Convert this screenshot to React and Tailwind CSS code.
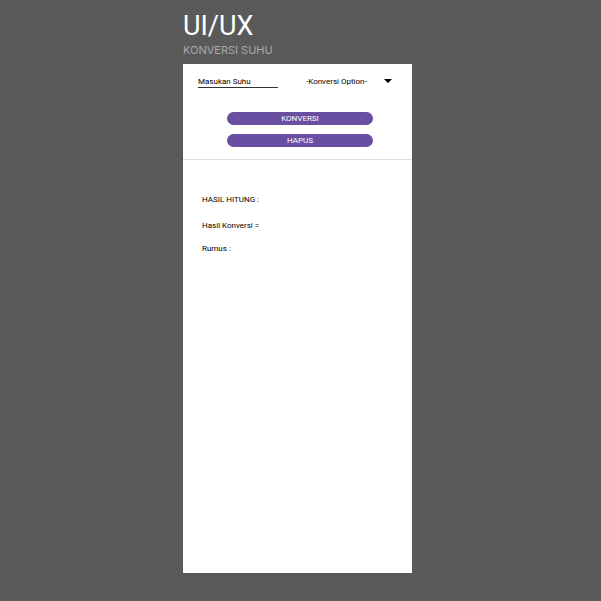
const pill =
  "block h-[13px] w-full rounded-full bg-[#684fa1] text-center text-[8px] leading-[13px] text-white";

export default function App() {
  return (
    <div className="min-h-screen bg-[#5a5a5a] pr-1.5 pb-7 font-['Roboto','Inter',sans-serif]">
      <div className="mx-auto w-full max-w-[229px]">
        <header className="pt-2.5 pb-1.5">
          <h1 className="text-[27px] leading-8 font-normal text-white">UI/UX</h1>
          <p className="font-['Inter',sans-serif] text-[11px] leading-4 font-normal text-[#a9a9a9]">KONVERSI SUHU</p>
        </header>
        <main className="min-h-[calc(100vh-92px)] bg-white text-black">
          <form className="border-b border-[#dcdcdc] pb-3" onSubmit={(e) => e.preventDefault()}>
            <div className="flex items-center justify-between pt-3 pr-5 pl-[15px]">
              <input
                type="text"
                aria-label="Masukan Suhu"
                placeholder="Masukan Suhu"
                className="h-3 w-20 border-b border-[#333] bg-transparent p-0 text-[8px] leading-3 outline-none placeholder:text-black placeholder:opacity-100"
              />
              <div className="relative w-[86px]">
                <select
                  aria-label="Konversi Option"
                  className="block h-3 w-full appearance-none bg-transparent p-0 text-[8px] leading-3 outline-none"
                >
                  <option>-Konversi Option-</option>
                </select>
                <svg
                  viewBox="0 0 8 4"
                  className="pointer-events-none absolute top-[3px] right-0 h-1 w-2"
                  aria-hidden="true"
                >
                  <path d="M0 0H8L4.6 3.6Q4 4.2 3.4 3.6Z" fill="#000" />
                </svg>
              </div>
            </div>
            <div className="mt-6 flex flex-col gap-[9px] pr-[39px] pl-11">
              <button type="submit" className={pill}>KONVERSI</button>
              <button type="reset" className={pill}>HAPUS</button>
            </div>
          </form>
          <section className="px-[19px] pt-[34px] text-[8px] leading-3">
            <h2>HASIL HITUNG :</h2>
            <p className="mt-3.5">Hasil Konversi =</p>
            <p className="mt-[11px]">Rumus :</p>
          </section>
        </main>
      </div>
    </div>
  );
}
